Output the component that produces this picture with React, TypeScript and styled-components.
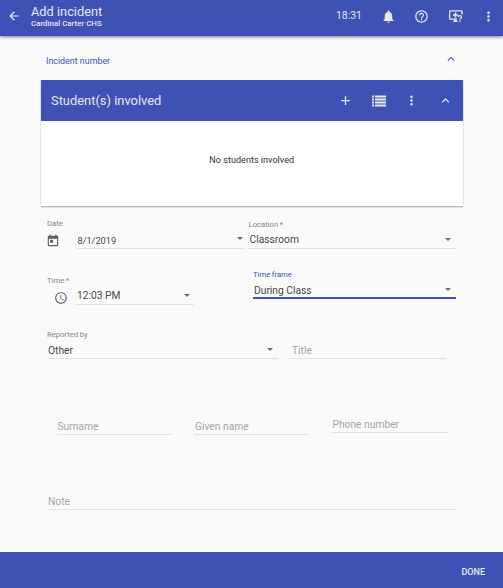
import React from "react";
import styled, { createGlobalStyle } from "styled-components";
import {
  MdAccessTime,
  MdAdd,
  MdArrowBack,
  MdHelpOutline,
  MdKeyboardArrowUp,
  MdMoreVert,
  MdNotifications,
  MdToday,
} from "react-icons/md";

const indigo = "#3f51b5";

const GlobalStyle = createGlobalStyle`
  * { box-sizing: border-box; }
  body {
    margin: 0;
    background: #fafafa;
    font-family: Roboto, "Liberation Sans", sans-serif;
    overflow: hidden;
  }
  svg { display: block; flex: none; }
`;

const Page = styled.div`
  width: 503px;
  height: 588px;
  display: flex;
  flex-direction: column;
  background: #fafafa;
  color: #4b4b4b;
`;

const AppBar = styled.header`
  height: 36px;
  flex: none;
  display: flex;
  align-items: flex-start;
  padding-left: 7px;
  background: ${indigo};
  color: #e8eaf6;
  box-shadow: 0 1px 3px rgba(0, 0, 0, 0.5);
`;

const BackButton = styled.div`
  width: 24px;
  padding-top: 9px;
`;

const Titles = styled.div`
  flex: 1;
  padding-top: 4px;
`;

const Title = styled.div`
  font-size: 12.8px;
  line-height: 15px;
`;

const Subtitle = styled.div`
  font-size: 7.9px;
  line-height: 9px;
  font-weight: 500;
`;

const Clock = styled.div`
  width: 35px;
  font-size: 10.4px;
  line-height: 32px;
`;

const BarAction = styled.div<{ $width: number }>`
  width: ${(p) => p.$width}px;
  height: 32px;
  display: flex;
  align-items: center;
  justify-content: center;
`;

const SectionRow = styled.div`
  height: 44px;
  flex: none;
  display: flex;
  align-items: center;
  justify-content: space-between;
  padding: 2px 45px 0 46px;
  color: ${indigo};
  font-size: 8.9px;
`;

const SectionLabel = styled.span`
  padding-top: 3px;
`;

const Panel = styled.section`
  height: 126px;
  flex: none;
  margin: 0 40px 0 40.5px;
  background: #fff;
  box-shadow: 0 1px 1.5px rgba(0, 0, 0, 0.35);
`;

const PanelHeader = styled.div`
  height: 41px;
  display: flex;
  align-items: center;
  padding: 0 1px 0 10.5px;
  background: ${indigo};
  color: #e8eaf6;
`;

const PanelTitle = styled.div`
  flex: 1;
  font-size: 12.9px;
`;

const EmptyMessage = styled.div`
  height: 85px;
  padding-top: 32px;
  text-align: center;
  font-size: 9.1px;
  line-height: 14px;
  color: #333;
`;

const FormRow = styled.div<{ $height: number; $left: number }>`
  height: ${(p) => p.$height}px;
  flex: none;
  display: flex;
  align-items: flex-end;
  padding-left: ${(p) => p.$left}px;
`;

const FieldBox = styled.div<{ $width: number; $gap: number; $lift: number }>`
  width: ${(p) => p.$width}px;
  margin-left: ${(p) => p.$gap}px;
  margin-bottom: ${(p) => p.$lift}px;
`;

const FieldLabel = styled.div<{ $active?: boolean; $raise?: number }>`
  font-size: 7.7px;
  line-height: 10px;
  margin-bottom: ${(p) => 1 + (p.$raise ?? 0)}px;
  word-spacing: -0.4px;
  color: ${(p) => (p.$active ? indigo : "#858585")};
`;

const Control = styled.div`
  display: flex;
  align-items: flex-end;
`;

const LeadIcon = styled.div<{ $width: number; $inset: number; $rise: number }>`
  width: ${(p) => p.$width}px;
  padding-left: ${(p) => p.$inset}px;
  padding-bottom: ${(p) => p.$rise}px;
  margin-left: -1px;
  color: #616161;
`;

const Value = styled.div<{ $active?: boolean; $empty?: boolean; $size?: number; $high?: boolean }>`
  flex: 1;
  height: 18px;
  display: flex;
  justify-content: space-between;
  padding: ${(p) => (p.$high ? 0 : 1)}px 5px 0 1px;
  border-bottom: ${(p) => (p.$active ? `2px solid ${indigo}` : "1px solid #e2e2e2")};
  font-size: ${(p) => p.$size ?? 10.25}px;
  line-height: 17px;
  white-space: nowrap;
  color: ${(p) => (p.$empty ? "#a5a5a5" : "#484848")};
`;

const Caret = styled.span<{ $shift?: number; $top?: number }>`
  width: 0;
  height: 0;
  margin-top: ${(p) => p.$top ?? 6}px;
  margin-right: ${(p) => p.$shift ?? 0}px;
  border: 3.5px solid transparent;
  border-top-color: #6c6c6c;
  border-bottom: 0;
`;

const Footer = styled.footer`
  height: 36px;
  flex: none;
  margin-top: auto;
  display: flex;
  justify-content: flex-end;
  padding: 2px 18px 0 0;
  background: ${indigo};
`;

const DoneButton = styled.button`
  border: 0;
  padding: 0;
  background: none;
  color: #e8eaf6;
  font: 500 9px/36px Roboto, sans-serif;
`;

const ListIcon = () => (
  <svg width="14" height="12" viewBox="0 0 14 12" fill="currentColor">
    <path d="M0 .5h2v2H0zM3 .5h11v2H3zM0 3.5h2v2H0zM3 3.5h11v2H3zM0 6.5h2v2H0zM3 6.5h11v2H3zM0 9.5h2v2H0zM3 9.5h11v2H3z" />
  </svg>
);

const ScreenHelpIcon = () => (
  <svg width="14" height="13" viewBox="0 0 14 13" fill="none" stroke="currentColor">
    <path d="M8 9.2H1.3a.6.6 0 0 1-.6-.6V1.4c0-.4.3-.6.6-.6h11.1c.4 0 .6.2.6.6v3.2" strokeWidth="1.3" />
    <path d="M6.5 2.5v5M4 5h5" strokeWidth="1.5" />
    <path d="M4.3 11.3h4.2M5 10.3h3" strokeWidth="1.2" />
    <path d="M9.2 7.1c0-1 .7-1.6 1.7-1.6s1.7.6 1.7 1.5c0 1.2-1.7 1.3-1.7 2.7M10.9 10.6v1.3" strokeWidth="1.25" />
  </svg>
);

interface FieldProps {
  label?: string;
  value: string;
  width: number;
  gap?: number;
  lift?: number;
  active?: boolean;
  empty?: boolean;
  select?: boolean;
  high?: boolean;
  caretShift?: number;
  caretTop?: number;
  labelRaise?: number;
  size?: number;
  lead?: React.ReactNode;
}

const Field = ({
  label, value, width, gap = 0, lift = 0, active, empty, select, high, caretShift, caretTop, labelRaise, size, lead,
}: FieldProps) => (
  <FieldBox $width={width} $gap={gap} $lift={lift}>
    {label && <FieldLabel $active={active} $raise={labelRaise}>{label}</FieldLabel>}
    <Control>
      {lead}
      <Value $active={active} $empty={empty} $size={size} $high={high}>
        <span>{value}</span>
        {select && <Caret $shift={caretShift} $top={caretTop} />}
      </Value>
    </Control>
  </FieldBox>
);

export default function App() {
  return (
    <Page>
      <GlobalStyle />
      <AppBar>
        <BackButton><MdArrowBack size={14} /></BackButton>
        <Titles>
          <Title>Add incident</Title>
          <Subtitle>Cardinal Carter CHS</Subtitle>
        </Titles>
        <Clock>18:31</Clock>
        <BarAction $width={35}><MdNotifications size={15} /></BarAction>
        <BarAction $width={31}><MdHelpOutline size={15} /></BarAction>
        <BarAction $width={37}><ScreenHelpIcon /></BarAction>
        <BarAction $width={29}><MdMoreVert size={15} /></BarAction>
      </AppBar>

      <SectionRow>
        <SectionLabel>Incident number</SectionLabel>
        <MdKeyboardArrowUp size={14} />
      </SectionRow>

      <Panel>
        <PanelHeader>
          <PanelTitle>Student(s) involved</PanelTitle>
          <BarAction $width={34}><MdAdd size={15} /></BarAction>
          <BarAction $width={33}><ListIcon /></BarAction>
          <BarAction $width={33}><MdMoreVert size={15} /></BarAction>
          <BarAction $width={34}><MdKeyboardArrowUp size={15} /></BarAction>
        </PanelHeader>
        <EmptyMessage>No students involved</EmptyMessage>
      </Panel>

      <FormRow $height={43} $left={47}>
        <Field
          label="Date" value="8/1/2019" width={197} size={9.2} select caretShift={-4} caretTop={5} labelRaise={1}
          lead={<LeadIcon $width={30.5} $inset={0} $rise={1}><MdToday size={14} /></LeadIcon>}
        />
        <Field label="Location *" value="Classroom" width={207} gap={4.5} select high caretTop={7} />
      </FormRow>

      <FormRow $height={56} $left={47}>
        <Field
          label="Time *" value="12:03 PM" width={147} select high caretShift={-1} caretTop={7}
          lead={<LeadIcon $width={30} $inset={8} $rise={0}><MdAccessTime size={14} /></LeadIcon>}
        />
        <Field label="Time frame" value="During Class" width={203} gap={59} lift={6} active select />
      </FormRow>

      <FormRow $height={54} $left={47}>
        <Field label="Reported by" value="Other" width={231} select />
        <Field value="Title" width={155} gap={13} empty />
      </FormRow>

      <FormRow $height={76} $left={56.5}>
        <Field value="Surname" width={115} empty />
        <Field value="Given name" width={115} gap={22.5} empty />
        <Field value="Phone number" width={115} gap={22.5} lift={2} empty />
      </FormRow>

      <FormRow $height={75} $left={47}>
        <Field value="Note" width={409} empty />
      </FormRow>

      <Footer>
        <DoneButton>DONE</DoneButton>
      </Footer>
    </Page>
  );
}
